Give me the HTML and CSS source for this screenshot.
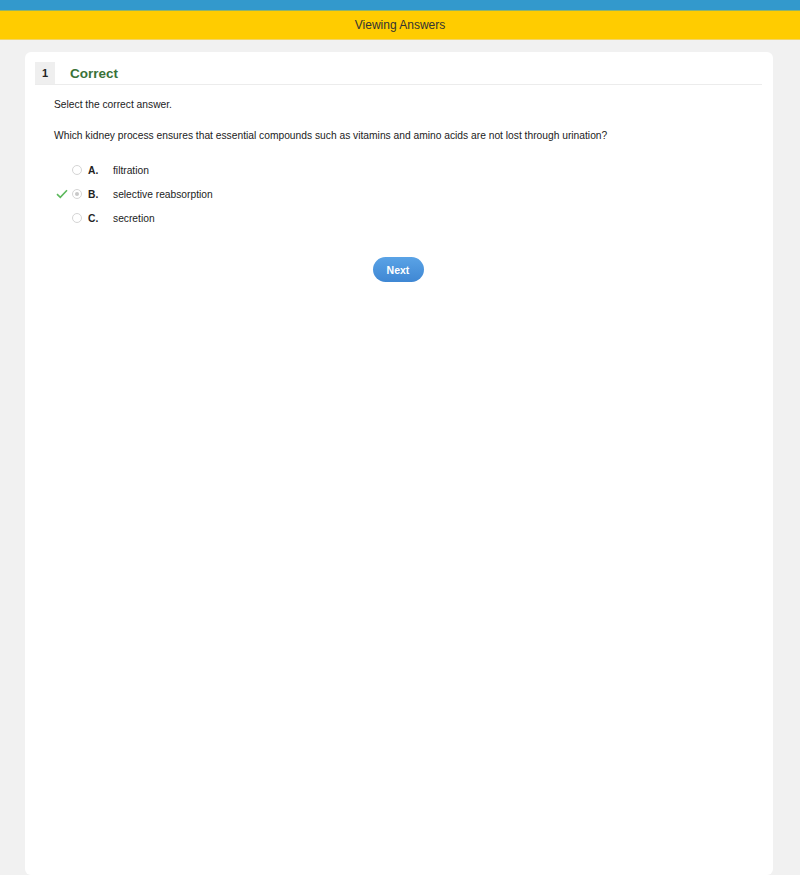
FILE: index.html
```html
<!DOCTYPE html>
<html lang="en">

<head>
    <meta charset="UTF-8">
    <title>Viewing Answers</title>
    <link rel="stylesheet" href="styles.css">
</head>

<body>
    <div class="top-bar"></div>
    <div class="title-bar">Viewing Answers</div>
    <div class="page">
        <div class="card">
            <div class="question-head">
                <span class="q-number">1</span>
                <span class="q-status">Correct</span>
            </div>
            <div class="question-body">
                <p class="instruction">Select the correct answer.</p>
                <p class="prompt">Which kidney process ensures that essential compounds such as vitamins and amino acids are not lost through urination?</p>
                <ul class="options">
                    <li class="option">
                        <span class="mark"></span>
                        <span class="radio"></span>
                        <span class="letter">A.</span>
                        <span class="answer">filtration</span>
                    </li>
                    <li class="option">
                        <span class="mark">
                            <svg width="12" height="10" viewBox="0 0 12 10"><path d="M1 5.2 L4.3 8.3 L11 1.2" fill="none" stroke="#5cb85c" stroke-width="1.6"/></svg>
                        </span>
                        <span class="radio checked"></span>
                        <span class="letter">B.</span>
                        <span class="answer">selective reabsorption</span>
                    </li>
                    <li class="option">
                        <span class="mark"></span>
                        <span class="radio"></span>
                        <span class="letter">C.</span>
                        <span class="answer">secretion</span>
                    </li>
                </ul>
                <div class="actions">
                    <button class="next-button">Next</button>
                </div>
            </div>
        </div>
    </div>
</body>

</html>
```

FILE: styles.css
```css
html,
body {
    margin: 0;
    padding: 0;
    height: 100%;
}

body {
    font-family: Arial, "Liberation Sans", sans-serif;
    background-color: #f1f1f1;
    color: #222;
    font-size: 10.25px;
    overflow: hidden;
}

.top-bar {
    height: 10px;
    background-color: #3399cc;
    border-bottom: 1px solid #8fb46a;
}

.title-bar {
    height: 28px;
    line-height: 28px;
    background-color: #ffcc00;
    border-bottom: 1px solid #f3d465;
    text-align: center;
    font-size: 12px;
    color: #333;
}

.page {
    padding: 12px 27px 0 25px;
    height: calc(100% - 52px);
}

.card {
    background-color: #fff;
    border-radius: 6px;
    height: 100%;
    padding: 10px 11px 0 10px;
    box-sizing: border-box;
}

.question-head {
    display: flex;
    align-items: center;
    border-bottom: 1px solid #ececec;
    height: 22px;
}

.q-number {
    width: 20px;
    height: 22px;
    line-height: 22px;
    background-color: #efefef;
    text-align: center;
    font-weight: bold;
    font-size: 11px;
    color: #222;
}

.q-status {
    margin-left: 15px;
    color: #3a7238;
    font-weight: bold;
    font-size: 13.5px;
}

.question-body {
    padding-left: 19px;
}

.instruction {
    margin: 14px 0 0;
}

.prompt {
    margin: 20px 0 0;
}

.options {
    list-style: none;
    margin: 17px 0 0;
    padding: 0;
}

.option {
    display: flex;
    align-items: center;
    height: 24px;
}

.mark {
    width: 12px;
    height: 10px;
    margin-left: 2px;
    display: flex;
}

.radio {
    width: 8px;
    height: 8px;
    border: 1px solid #d5d5d5;
    border-radius: 50%;
    margin-left: 4px;
    background-color: #fff;
    position: relative;
}

.radio.checked::after {
    content: "";
    position: absolute;
    left: 2px;
    top: 2px;
    width: 4px;
    height: 4px;
    border-radius: 50%;
    background-color: #c8c8c8;
}

.letter {
    margin-left: 6px;
    width: 25px;
    font-weight: bold;
}

.actions {
    display: flex;
    justify-content: center;
    margin-top: 27px;
    padding-right: 20px;
}

.next-button {
    width: 51px;
    height: 25px;
    border: none;
    border-radius: 13px;
    background: linear-gradient(#5aa3e6, #3f87d3);
    color: #fff;
    font-family: Arial, "Liberation Sans", sans-serif;
    font-weight: bold;
    font-size: 10.5px;
    cursor: pointer;
    padding: 0;
}
```
